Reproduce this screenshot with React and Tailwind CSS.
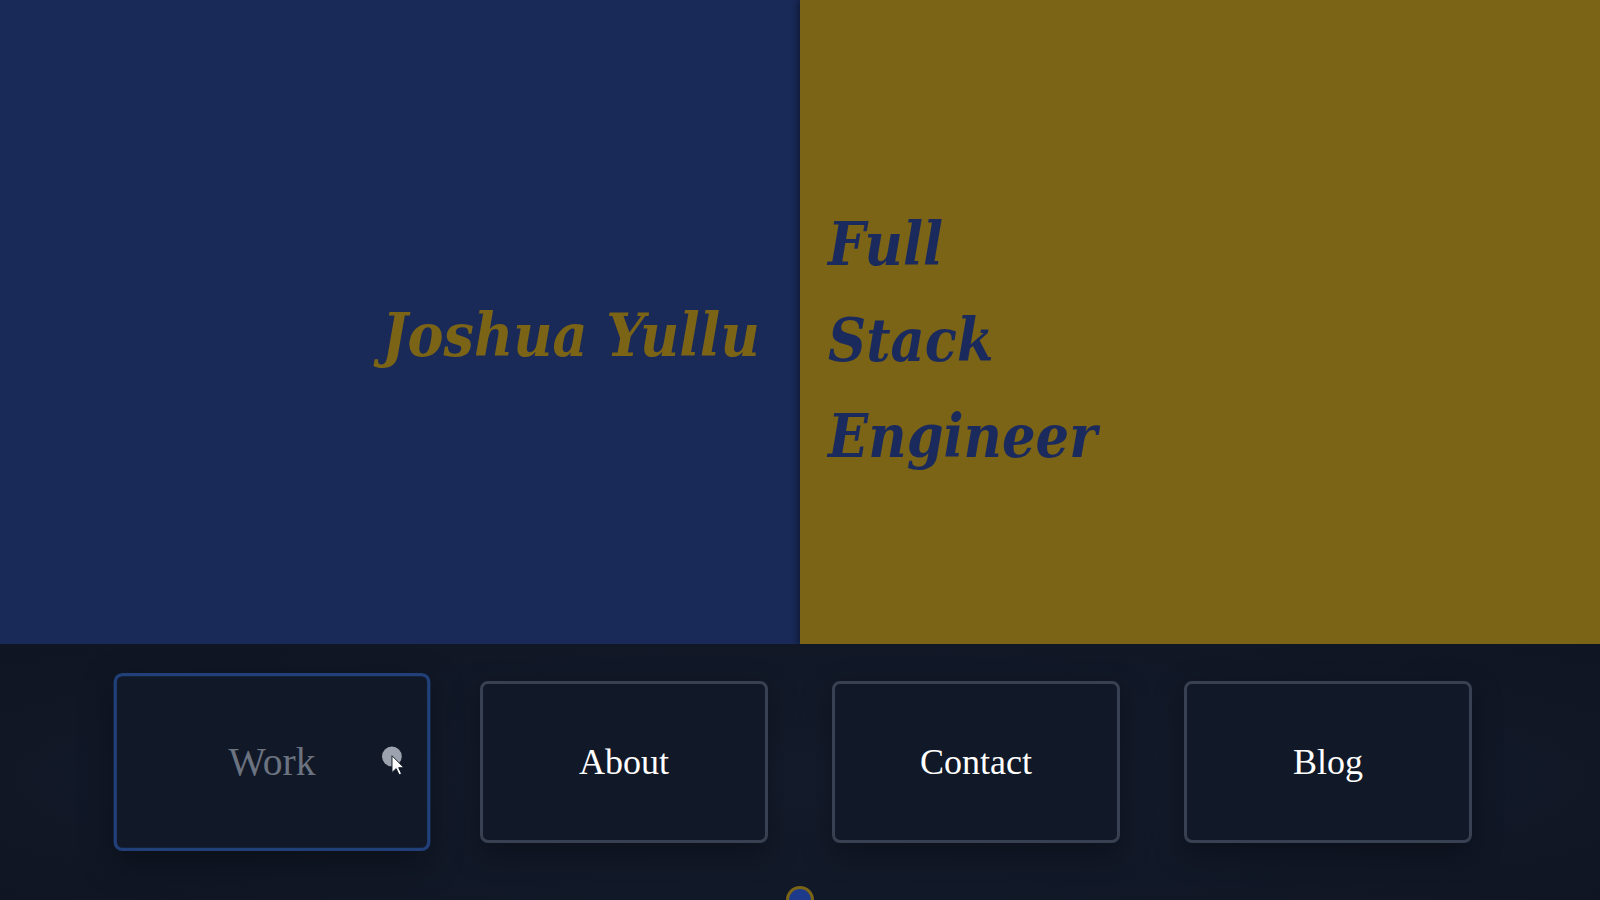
const links = ['Work', 'About', 'Contact', 'Blog'];

function NavBox({ label, active }) {
  if (active) {
    return (
      <div className="relative flex h-[162px] w-[288px] scale-110 items-center justify-center rounded-lg border-[3px] border-[#213f78] bg-[#111827] shadow-[0_10px_30px_rgba(0,0,0,0.35)]">
        <span className="text-4xl text-[#6b7280]">{label}</span>
        <span className="absolute left-[241px] top-[64px] h-[18px] w-[18px] rounded-full bg-[#9ca3af]" />
        <svg className="absolute left-[249px] top-[71px]" width="13" height="20" viewBox="0 0 12 18">
          <path d="M1 1 L1 15 L4.5 11.8 L7 17 L9 16 L6.6 11 L11 11 Z" fill="#ffffff" stroke="#111827" strokeWidth="0.8" />
        </svg>
      </div>
    );
  }
  return (
    <div className="flex h-[162px] w-[288px] items-center justify-center rounded-lg border-[3px] border-[#374151] bg-[#111827] shadow-[0_10px_30px_rgba(0,0,0,0.35)]">
      <span className="text-4xl text-white">{label}</span>
    </div>
  );
}

export default function App() {
  return (
    <div className="flex h-screen w-full flex-col overflow-hidden bg-[#111827] font-['Liberation_Serif',serif]">
      <section className="flex h-[644px] shrink-0">
        <div className="flex w-1/2 items-center justify-end bg-[#192958] pt-[26px] pr-10">
          {/* no condensed DejaVu face here, so squeeze it */}
          <h1 className="origin-right [transform:scaleX(0.9)] font-['DejaVu_Serif',serif] text-6xl font-bold italic text-[#7b6416]">
            Joshua Yullu
          </h1>
        </div>
        <div className="flex w-1/2 items-center bg-[#7b6416] pt-[36px] pl-7 shadow-[-3px_0_6px_rgba(0,0,0,0.35)]">
          <div className="origin-left [transform:scaleX(0.88)] font-['DejaVu_Serif',serif] text-6xl leading-[96px] font-bold italic text-[#1b2a5c]">
            <p>Full</p>
            <p>Stack</p>
            <p>Engineer</p>
          </div>
        </div>
      </section>

      <section className="flex flex-1 flex-col items-center bg-[radial-gradient(ellipse_at_center,#141c2c_0%,#111827_60%,#0f1522_100%)] pt-[37px]">
        <div className="flex gap-16">
          {links.map((label) => (
            <NavBox key={label} label={label} active={label === 'Work'} />
          ))}
        </div>
        <div className="mt-[43px] h-7 w-7 shrink-0 rounded-full border-[3px] border-[#7b6416] bg-[#1e3a8a]" />
      </section>
    </div>
  );
}
